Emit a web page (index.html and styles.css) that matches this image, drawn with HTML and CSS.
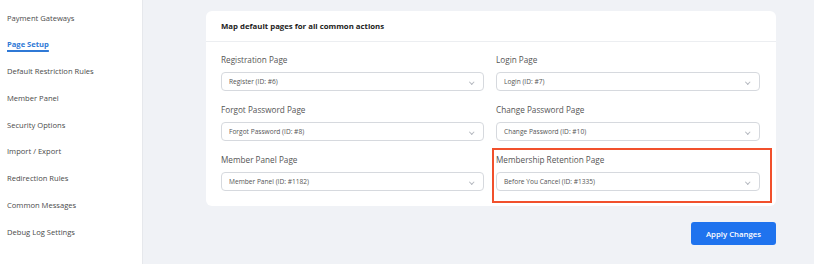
FILE: index.html
```html
<!DOCTYPE html>
<html lang="en">
<head>
    <meta charset="UTF-8">
    <title>Page Setup</title>
    <link rel="stylesheet" href="styles.css">
</head>
<body>
    <div class="layout">
        <nav class="sidebar">
            <a class="nav-item">Payment Gateways</a>
            <a class="nav-item active">Page Setup</a>
            <a class="nav-item">Default Restriction Rules</a>
            <a class="nav-item">Member Panel</a>
            <a class="nav-item">Security Options</a>
            <a class="nav-item">Import / Export</a>
            <a class="nav-item">Redirection Rules</a>
            <a class="nav-item">Common Messages</a>
            <a class="nav-item">Debug Log Settings</a>
        </nav>

        <main class="content">
            <div class="card">
                <div class="card-header">Map default pages for all common actions</div>
                <div class="card-body">
                    <div class="field">
                        <label>Registration Page</label>
                        <div class="select">Register (ID: #6)<span class="chevron"></span></div>
                    </div>
                    <div class="field">
                        <label>Login Page</label>
                        <div class="select">Login (ID: #7)<span class="chevron"></span></div>
                    </div>
                    <div class="field">
                        <label>Forgot Password Page</label>
                        <div class="select">Forgot Password (ID: #8)<span class="chevron"></span></div>
                    </div>
                    <div class="field">
                        <label>Change Password Page</label>
                        <div class="select">Change Password (ID: #10)<span class="chevron"></span></div>
                    </div>
                    <div class="field">
                        <label>Member Panel Page</label>
                        <div class="select">Member Panel (ID: #1182)<span class="chevron"></span></div>
                    </div>
                    <div class="field highlighted">
                        <label>Membership Retention Page</label>
                        <div class="select">Before You Cancel (ID: #1335)<span class="chevron"></span></div>
                    </div>
                </div>
            </div>
            <div class="actions">
                <button class="btn-primary">Apply Changes</button>
            </div>
        </main>
    </div>
</body>
</html>
```

FILE: styles.css
```css
body {
    margin: 0;
    font-family: 'Open Sans', sans-serif;
    background-color: #f0f2f6;
    color: #444444;
}

.layout {
    display: flex;
    height: 264px;
}

.sidebar {
    width: 142px;
    background-color: #ffffff;
    border-right: 1px solid #e6e8ec;
    padding-top: 4.6px;
    display: flex;
    flex-direction: column;
}

.nav-item {
    height: 26.75px;
    line-height: 26.75px;
    padding-left: 7px;
    font-size: 7.6px;
    color: #4a4a4a;
}

.nav-item.active {
    color: #2f79d6;
    font-weight: 700;
    text-decoration: underline;
    text-underline-offset: 3px;
    text-decoration-thickness: 1.5px;
}

.content {
    flex: 1;
    padding: 11px 0 0 63px;
}

.card {
    width: 570px;
    background-color: #ffffff;
    border-radius: 6px;
}

.card-header {
    height: 30px;
    line-height: 31px;
    padding-left: 15px;
    font-size: 7.8px;
    font-weight: 700;
    color: #222222;
    border-bottom: 1px solid #eceef1;
}

.card-body {
    display: grid;
    grid-template-columns: 263px 264px;
    column-gap: 12px;
    row-gap: 13px;
    padding: 12px 15px 15px 15px;
}

.field {
    position: relative;
}

.field label {
    display: block;
    height: 12px;
    line-height: 12px;
    margin-bottom: 6px;
    font-size: 8.2px;
    color: #555555;
}

.select {
    height: 19px;
    line-height: 18px;
    box-sizing: border-box;
    border: 1px solid #d6d9de;
    border-radius: 4px;
    padding-left: 7px;
    font-size: 6.6px;
    color: #555555;
    position: relative;
}

.chevron {
    position: absolute;
    right: 10px;
    top: 6.5px;
    width: 2.5px;
    height: 2.5px;
    border-right: 1px solid #b4b8bf;
    border-bottom: 1px solid #b4b8bf;
    transform: rotate(45deg);
}

/* red annotation box around the retention field */
.highlighted::after {
    content: '';
    position: absolute;
    left: -4px;
    right: -12px;
    top: -6px;
    bottom: -12px;
    border: 2px solid #f1502c;
}

.actions {
    width: 570px;
    display: flex;
    justify-content: flex-end;
    margin-top: 16px;
}

.btn-primary {
    width: 85px;
    height: 23px;
    background-color: #1f73ee;
    color: #ffffff;
    border: none;
    border-radius: 3px;
    font-family: 'Open Sans', sans-serif;
    font-size: 7.8px;
    font-weight: 600;
    padding: 0;
}
```
